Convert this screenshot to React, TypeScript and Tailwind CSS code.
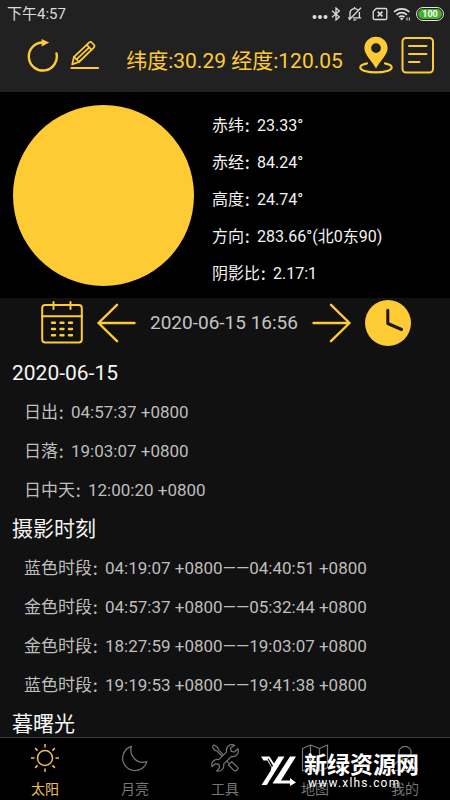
import { ReactNode } from "react";

type TRow = { label: string; value: string };
type TSection = { title: string; rows: TRow[] };

const sunInfo: TRow[] = [
  { label: "赤纬", value: "23.33°" },
  { label: "赤经", value: "84.24°" },
  { label: "高度", value: "24.74°" },
  { label: "方向", value: "283.66°(北0东90)" },
  { label: "阴影比", value: "2.17:1" },
];

const sections: TSection[] = [
  {
    title: "2020-06-15",
    rows: [
      { label: "日出", value: "04:57:37 +0800" },
      { label: "日落", value: "19:03:07 +0800" },
      { label: "日中天", value: "12:00:20 +0800" },
    ],
  },
  {
    title: "摄影时刻",
    rows: [
      { label: "蓝色时段", value: "04:19:07 +0800——04:40:51 +0800" },
      { label: "金色时段", value: "04:57:37 +0800——05:32:44 +0800" },
      { label: "金色时段", value: "18:27:59 +0800——19:03:07 +0800" },
      { label: "蓝色时段", value: "19:19:53 +0800——19:41:38 +0800" },
    ],
  },
  { title: "暮曙光", rows: [] },
];

function Row({ label, value }: TRow) {
  return (
    <>
      {label}
      <span className="text-[13px] font-bold">：</span>
      {value}
    </>
  );
}

function StatusBar() {
  return (
    <div className="flex h-7 items-center justify-between pl-[7px] pr-[6px] text-[15px] text-[#dcdcdc]">
      <span>下午4:57</span>
      <div className="flex items-center">
        <svg width="16" height="14" viewBox="0 0 16 14" fill="currentColor">
          <circle cx="2.5" cy="10" r="2" />
          <circle cx="8" cy="10" r="2" />
          <circle cx="13.5" cy="10" r="2" />
        </svg>
        <svg
          className="ml-[3px]"
          width="10"
          height="14"
          viewBox="0 0 10 14"
          fill="none"
          stroke="currentColor"
          strokeWidth="1.3"
        >
          <path d="M1 3.8 8.3 10 5 13V1l3.3 3L1 10.2" />
        </svg>
        <svg
          className="ml-[6px]"
          width="16"
          height="14"
          viewBox="0 0 16 14"
          fill="none"
          stroke="currentColor"
          strokeWidth="1.3"
        >
          <path d="M3 10.5V6a4.6 4.6 0 0 1 8-2.8M12.4 5v5.5M6 10.8h8.2M1 10.8h2M6.3 12.8h3M14 .8 2 13M7.6 0v1.4" />
        </svg>
        <svg
          className="ml-[9px]"
          width="16"
          height="14"
          viewBox="0 0 16 14"
          fill="none"
          stroke="currentColor"
          strokeWidth="1.3"
        >
          <path d="M4.3 1.5h9.2a1.3 1.3 0 0 1 1.3 1.3v8.4a1.3 1.3 0 0 1-1.3 1.3h-11A1.3 1.3 0 0 1 1.2 11.2V4.6Z" />
          <path d="m5.7 4.6 4.8 4.8m0-4.8L5.7 9.4" strokeWidth="1.6" />
        </svg>
        <svg
          className="ml-[5px]"
          width="18"
          height="14"
          viewBox="0 0 18 14"
          fill="none"
          stroke="currentColor"
          strokeWidth="1.7"
        >
          <path d="M1 5a11 11 0 0 1 15.4 0M3.6 7.8a7.3 7.3 0 0 1 10.2 0M6 10.2a3.8 3.8 0 0 1 5.4 0" />
          <path d="m7 11.6 1.7 1.9 1.7-1.9a2.5 2.5 0 0 0-3.4 0Z" fill="currentColor" stroke="none" />
          <path d="M14 10.5v3M16.3 10.5v3" strokeWidth="1" />
        </svg>
        <span className="ml-[5px] flex h-[14px] w-7 items-center justify-center rounded-full border border-[#e4e4e4] p-px">
          <span className="flex h-[10px] w-full items-center justify-center rounded-full bg-[#46b02c] text-[9px] leading-none font-bold text-white">
            100
          </span>
        </span>
      </div>
    </div>
  );
}

function Header() {
  return (
    <header className="bg-[#212121]">
      <StatusBar />
      <div className="flex h-16 items-start pl-[26px] pr-4 pt-2 text-[#ffcb35]">
        <div className="flex gap-[10px] pt-[3px]">
          <button aria-label="刷新">
            <svg width="33" height="33" viewBox="0 0 33 33" fill="none" stroke="currentColor">
              <path
                d="M30.5 14.5a14 14 0 1 1-13.8-11"
                strokeWidth="2.4"
                strokeLinecap="round"
              />
              <path d="M15.6 0v7.6l7.6-4Z" fill="currentColor" stroke="none" />
            </svg>
          </button>
          <button aria-label="编辑">
            <svg
              width="31"
              height="33"
              viewBox="0 0 31 33"
              fill="none"
              stroke="currentColor"
              strokeWidth="1.8"
              strokeLinejoin="round"
              strokeLinecap="round"
            >
              <path d="M3.2 25.4 5 17.8 20.3 3.4a1.7 1.7 0 0 1 2.4.1l2.3 2.4a1.7 1.7 0 0 1 0 2.4L10 23Z" />
              <path d="m5 17.8 5 5.2M17.8 5.8l4.8 5M7.8 20.2 20 8.6" />
              <path d="M2.5 29h26.5" strokeWidth="2.2" />
            </svg>
          </button>
        </div>
        <h1 className="flex-1 pt-[9px] pl-[10px] text-center text-[21px] leading-8">
          纬度:30.29 经度:120.05
        </h1>
        <div className="flex gap-2">
          <button aria-label="定位">
            <svg width="34" height="38" viewBox="0 0 34 38" fill="none">
              <path
                d="M8 27.4C3.8 28.3 1.3 29.8 1.3 31.4c0 2.8 7 5 15.7 5s15.7-2.2 15.7-5c0-1.6-2.5-3.1-6.7-4"
                stroke="currentColor"
                strokeWidth="2.2"
                strokeLinecap="round"
              />
              <path
                fillRule="evenodd"
                d="M17 .8C10.5.8 5.4 5.7 5.4 12c0 7 7.6 13 11.6 20.5C21 25 28.6 19 28.6 12 28.6 5.7 23.5.8 17 .8Zm0 6.4a4.9 4.9 0 1 1 0 9.8 4.9 4.9 0 0 1 0-9.8Z"
                fill="currentColor"
              />
            </svg>
          </button>
          <button aria-label="列表">
            <svg
              width="33"
              height="38"
              viewBox="0 0 33 38"
              fill="none"
              stroke="currentColor"
              strokeWidth="2"
              strokeLinecap="round"
            >
              <rect x="1.5" y="2" width="30.5" height="34.5" rx="3.5" />
              <path d="M8 10h17.5M8 18h17.5M8 26h10.5" />
            </svg>
          </button>
        </div>
      </div>
    </header>
  );
}

function SunPanel() {
  return (
    <section className="flex h-[206px] items-center gap-[18px] bg-black pl-[13px]">
      <div className="size-[181px] shrink-0 rounded-full bg-[#ffcb35]" />
      <ul className="pt-[10px] text-base text-[#f2f2f2]">
        {sunInfo.map((item) => (
          <li key={item.label} className="h-[37px] leading-9 whitespace-nowrap">
            <Row {...item} />
          </li>
        ))}
      </ul>
    </section>
  );
}

function DateBar() {
  return (
    <div className="flex h-[50px] items-center justify-center gap-[14px] pl-0.5 text-[#ffcb35]">
      <button aria-label="选择日期">
        <svg
          width="42"
          height="44"
          viewBox="0 0 42 44"
          fill="none"
          stroke="currentColor"
          strokeWidth="2"
          strokeLinecap="round"
        >
          <rect x="1.2" y="4" width="39.6" height="37.5" rx="3" />
          <path d="M1.2 15.3h39.6M12.5 1v7M29.5 1v7" />
          <path
            d="M11 21.8h3M19.5 21.8h3M28 21.8h3M11 28h3M19.5 28h3M28 28h3M11 34.2h3M19.5 34.2h3M28 34.2h3"
            strokeWidth="2.4"
          />
        </svg>
      </button>
      <button aria-label="前一天">
        <svg
          width="39"
          height="40"
          viewBox="0 0 39 40"
          fill="none"
          stroke="currentColor"
          strokeWidth="2.4"
          strokeLinecap="round"
          strokeLinejoin="round"
        >
          <path d="M20 1.8 1.5 20 20 38.2M1.5 20h36" />
        </svg>
      </button>
      <time className="text-[19px] text-[#c4c4c4]">2020-06-15 16:56</time>
      <button aria-label="后一天">
        <svg
          width="39"
          height="40"
          viewBox="0 0 39 40"
          fill="none"
          stroke="currentColor"
          strokeWidth="2.4"
          strokeLinecap="round"
          strokeLinejoin="round"
        >
          <path d="M19 1.8 37.5 20 19 38.2M37.5 20h-36" />
        </svg>
      </button>
      <button aria-label="当前时间">
        <svg width="46" height="46" viewBox="0 0 46 46" fill="none">
          <circle cx="23" cy="23" r="23" fill="currentColor" />
          <path
            d="M22.8 10.2v13.3l13.8 6"
            stroke="#1d1808"
            strokeWidth="3"
            strokeLinecap="round"
            strokeLinejoin="round"
          />
        </svg>
      </button>
    </div>
  );
}

function TimeList() {
  return (
    <main className="min-h-0 flex-1 overflow-hidden pt-[6px]">
      {sections.map((section) => (
        <section key={section.title}>
          <h2 className="h-[39px] pl-3 text-[21px] leading-[39px] text-[#f5f5f5]">
            {section.title}
          </h2>
          {section.rows.map((row) => (
            <p
              key={row.value}
              className="h-[39px] pl-6 text-[17px] leading-[39px] whitespace-nowrap text-[#bebebe]"
            >
              <Row {...row} />
            </p>
          ))}
        </section>
      ))}
    </main>
  );
}

type TTab = { label: string; active?: boolean; icon: ReactNode };

const tabs: TTab[] = [
  {
    label: "太阳",
    active: true,
    icon: (
      <>
        <circle cx="14" cy="14" r="7.5" strokeWidth="1.5" />
        <path
          d="M14 0v3.5M14 24.5V28M0 14h3.5M24.5 14H28M4.1 4.1l2.5 2.5M21.4 21.4l2.5 2.5M4.1 23.9l2.5-2.5M21.4 6.6l2.5-2.5"
          strokeWidth="1.5"
        />
      </>
    ),
  },
  {
    label: "月亮",
    icon: <path d="M10.6 2.4A12.3 12.3 0 1 0 25.8 17.6 12 12 0 0 1 10.6 2.4Z" />,
  },
  {
    label: "工具",
    icon: (
      <>
        <path d="M23.5 1.2C19-.6 14.400 3 15.600 7.800L7.800 15.600C3.600 14.600-.2 18.200.9 22.400l3.700-2.700 3.300.6.7 3.300-2.900 3.400c4.300 1.200 7.900-2.600 6.900-6.800l7.800-7.800c4.600 1 8.100-3.400 6.500-7.700l-3.400 3.300-3.300-.6-.7-3.300Z" />
        <path d="m1.200 2.600 1.800-1.600 3.800 2.400.5 2.300 5.200 5.200M1.200 2.600l2.400 3.700 2.200.5 5.200 5.200M15.700 17l2.200 2.200M17.500 21l3.300-3.300 5.400 5.200c1.900 1.900-1.500 5.300-3.400 3.400Z" />
      </>
    ),
  },
  {
    label: "地图",
    icon: <path d="M1.5 4.5 9.5 1l9 3.5 8-3.5v22.5l-8 3.5-9-3.5-8 3.5ZM9.5 1v22.5M18.5 4.5V27" />,
  },
  {
    label: "我的",
    icon: (
      <>
        <circle cx="14" cy="8.5" r="6.2" />
        <path d="M2 26.5c0-6.500 4.500-11 12-11s12 4.500 12 11Z" />
      </>
    ),
  },
];

function Watermark() {
  return (
    <div className="pointer-events-none absolute right-[31px] bottom-3 flex items-center gap-[7px] text-white">
      <svg width="36" height="30" viewBox="0 0 36 30" fill="currentColor">
        <path d="M0 .5h8.500l4.500 7L17.500.5h6L5.800 29H.5L9.500 15l1-3.500L6.300 4.500H2.500Z" />
        <path d="M29 .5h6L20 24.500h9V22l6 4.500-6 3.500v-2.500H11.500Z" />
        <path d="M6.500 2.800h1.200l4.300 6.800-1 1.600Z" fill="#000000" />
      </svg>
      <div>
        <p className="text-[23px] leading-[25px] font-bold">新绿资源网</p>
        <p className="pl-1 text-xs leading-[10px] tracking-widest">www.xlhs.com</p>
      </div>
    </div>
  );
}

function TabBar() {
  return (
    <nav className="relative flex h-[63px] shrink-0 border-t border-[#3c3c3c] bg-black">
      {tabs.map((tab) => (
        <a
          key={tab.label}
          href="#"
          className={
            tab.active
              ? "flex flex-1 flex-col items-center pt-[6px] text-[#efc057]"
              : "flex flex-1 flex-col items-center pt-[6px] text-[#777777]"
          }
        >
          <svg
            width="28"
            height="28"
            viewBox="0 0 28 28"
            fill="none"
            stroke="currentColor"
            strokeWidth="1.2"
            strokeLinejoin="round"
          >
            {tab.icon}
          </svg>
          <span className="pt-[7px] text-sm leading-5">{tab.label}</span>
        </a>
      ))}
      <Watermark />
    </nav>
  );
}

export default function App() {
  return (
    <div className="flex h-screen flex-col overflow-hidden bg-[#111111] font-[Roboto,'Noto_Sans_CJK_SC',sans-serif]">
      <Header />
      <SunPanel />
      <DateBar />
      <TimeList />
      <TabBar />
    </div>
  );
}
